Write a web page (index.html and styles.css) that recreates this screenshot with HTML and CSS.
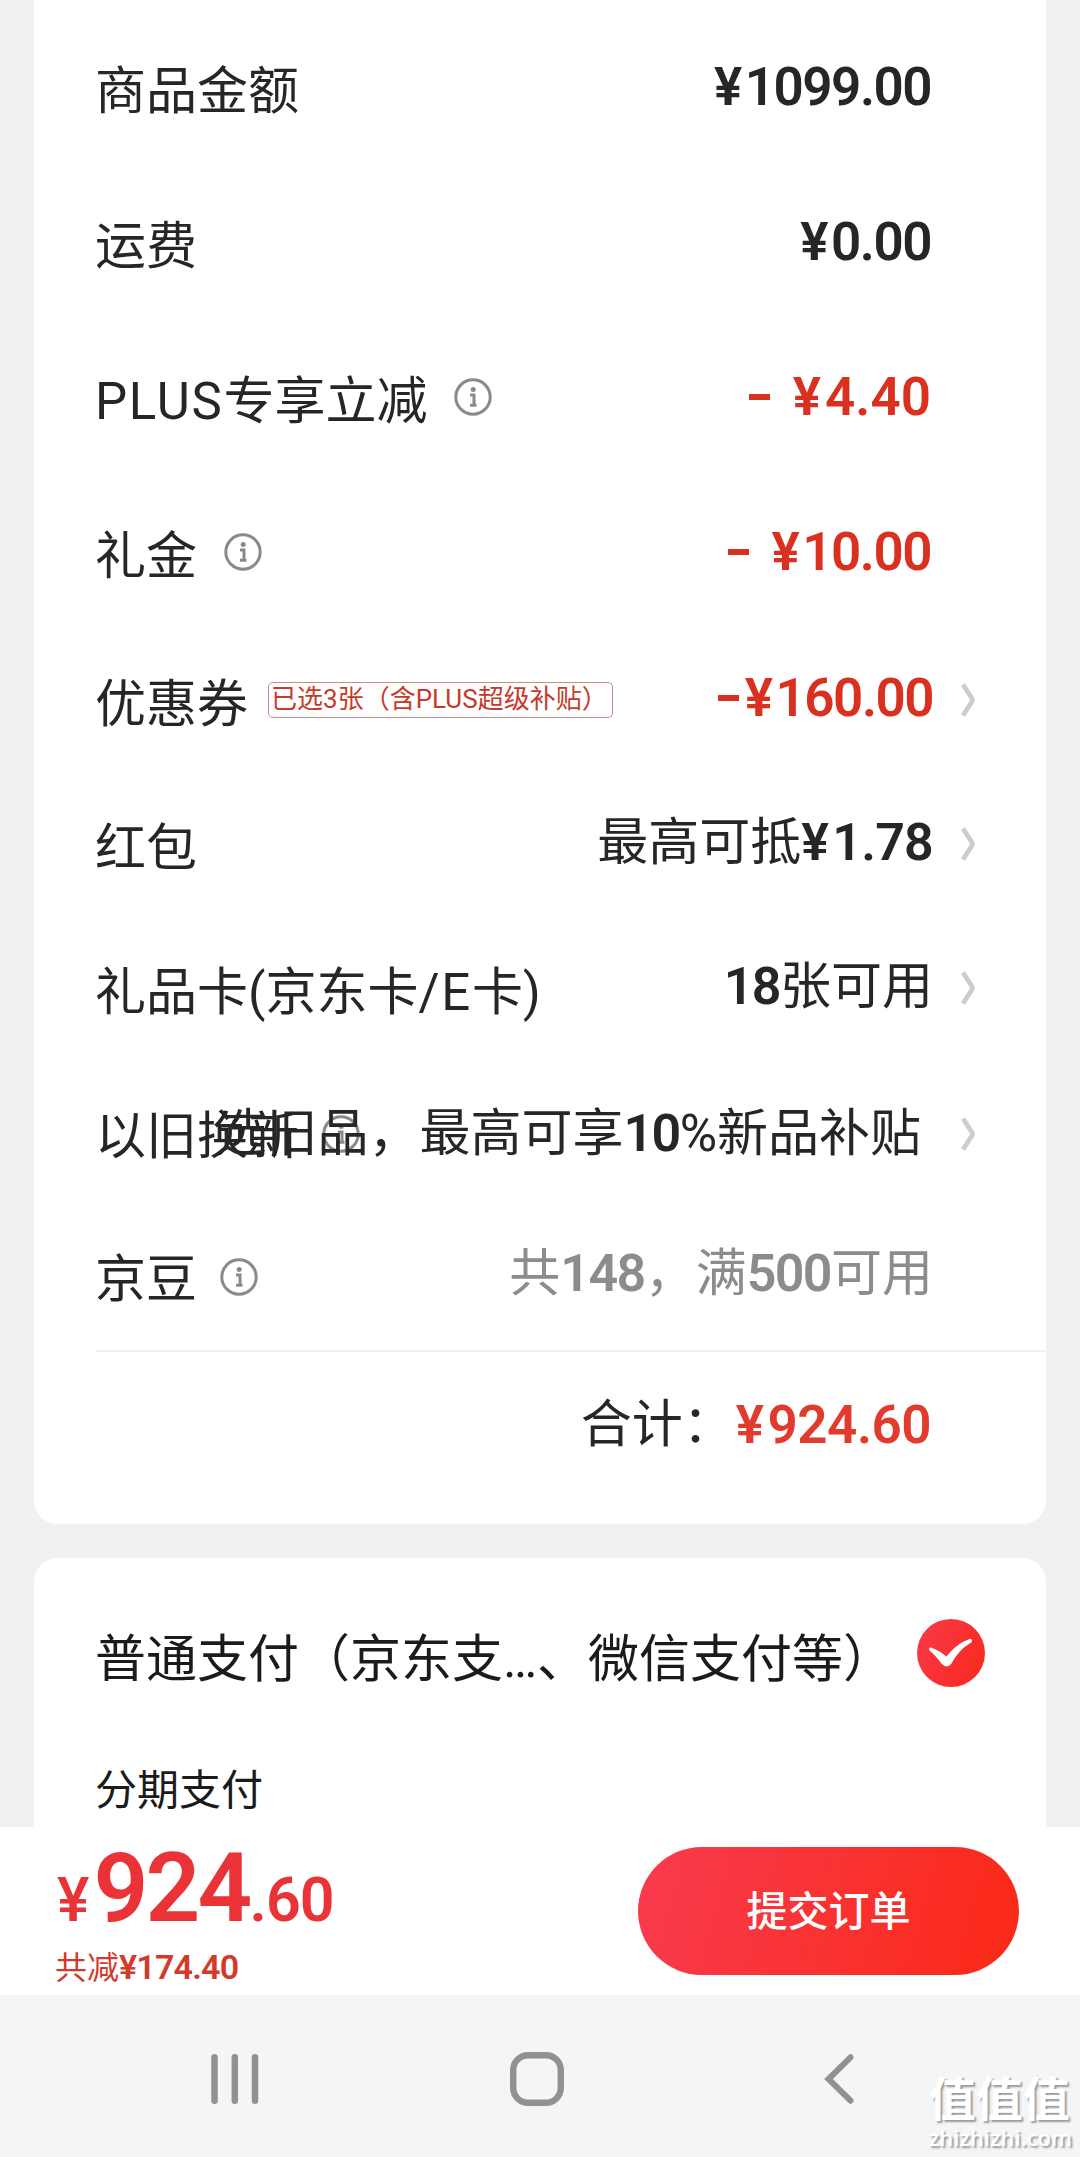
FILE: index.html
```html
<!DOCTYPE html>
<html lang="zh-CN">
<head>
<meta charset="utf-8">
<title>确认订单</title>
<link rel="stylesheet" href="styles.css">
</head>
<body>
<svg class="defs" aria-hidden="true">
  <symbol id="info" viewBox="0 0 38 38">
    <circle cx="19" cy="19" r="17.2" fill="none" stroke="currentColor" stroke-width="3"/>
    <circle cx="19.2" cy="11.4" r="2.5" fill="currentColor"/>
    <path d="M16 17h4v9.500M16 27.200h6.500" fill="none" stroke="currentColor" stroke-width="3"/>
  </symbol>
  <symbol id="chevron" viewBox="0 0 14 34">
    <path d="M2 1.500L11 15.500Q12 17 11 18.500L2 32.500" fill="none" stroke="currentColor" stroke-width="4.800"/>
  </symbol>
</svg>
<main class="page">
  <section class="card summary">
    <div class="row tall"><span class="label">商品金额</span><span class="value"><b><span class="cur">¥</span>1099.00</b></span></div>
    <div class="row tall"><span class="label">运费</span><span class="value"><b><span class="cur">¥</span>0.00</b></span></div>
    <div class="row tall"><span class="label"><span class="latin">PLUS</span>专享立减</span><svg class="info far"><use href="#info"/></svg><span class="value red"><i class="minus"></i><b class="loose"><span class="cur">¥</span>4.40</b></span></div>
    <div class="row tall"><span class="label">礼金</span><svg class="info far"><use href="#info"/></svg><span class="value red"><i class="minus"></i><b><span class="cur">¥</span>10.00</b></span></div>
    <div class="row"><span class="label">优惠券</span><span class="tag">已选3张（含PLUS超级补贴）</span><span class="value red"><i class="minus tight"></i><b><span class="cur">¥</span>160.00</b></span><svg class="chevron"><use href="#chevron"/></svg></div>
    <div class="row"><span class="label">红包</span><span class="value mixed">最高可抵<b class="loose"><span class="cur">¥</span>1.78</b></span><svg class="chevron"><use href="#chevron"/></svg></div>
    <div class="row"><span class="label">礼品卡(京东卡<span class="latin">/E</span>卡)</span><span class="value mixed"><b>18</b>张可用</span><svg class="chevron"><use href="#chevron"/></svg></div>
    <div class="row collide"><span class="label-group"><span class="label">以旧换新</span><svg class="info"><use href="#info"/></svg></span><span class="value mixed">选旧品，最高可享<b>10</b>%新品补贴</span><svg class="chevron"><use href="#chevron"/></svg></div>
    <div class="row last"><span class="label">京豆</span><svg class="info"><use href="#info"/></svg><span class="value mixed gray">共<b>148</b>，满<b>500</b>可用</span></div>
    <div class="total"><span class="total-label">合计：</span><b class="total-sum"><span class="cur">¥</span>924.60</b></div>
  </section>
  <section class="card payment">
    <div class="pay-row"><span class="pay-name">普通支付（京东支…、微信支付等）</span>
      <svg class="check" viewBox="0 0 68 68">
        <defs><linearGradient id="red" x1="0" y1="0" x2="1" y2="0.6"><stop offset="0" stop-color="#f9394a"/><stop offset="1" stop-color="#f92b23"/></linearGradient></defs>
        <circle cx="34" cy="34" r="34" fill="url(#red)"/>
        <path d="M14 28.500C20 31 24 33 29.500 37.500C36 29 43 23.500 52.500 20C55.500 19.500 56 22.500 53.500 24C45 29 39.500 35.500 34.500 44.500C31.500 48.500 27.500 48 24.500 44.500C20.500 39.500 17.500 35.500 13 32C11.500 30.200 12 28 14 28.500Z" fill="#fff"/>
      </svg>
    </div>
    <div class="pay-sub">分期支付</div>
  </section>
</main>
<footer class="checkout">
  <div class="sums">
    <div class="grand"><span class="yen">¥</span><span class="int">924</span><span class="dec">.60</span></div>
    <div class="saved">共减<b>¥174.40</b></div>
  </div>
  <button class="submit">提交订单</button>
</footer>
<nav class="navbar">
  <svg class="key recents" viewBox="0 0 48 50"><path d="M3.500 3.300v43.400M23.800 3.300v43.400M44 3.300v43.400" fill="none" stroke="#919191" stroke-width="6.500" stroke-linecap="round"/></svg>
  <svg class="key home" viewBox="0 0 54 54"><rect x="3.200" y="3.200" width="47.600" height="47.600" rx="15" fill="none" stroke="#919191" stroke-width="6.400"/></svg>
  <svg class="key back" viewBox="0 0 30 50"><path d="M26.500 3.300L4.500 25L26.500 46.700" fill="none" stroke="#919191" stroke-width="6" stroke-linecap="round"/></svg>
  <div class="mark"><span class="mark-name">值值值</span><span class="mark-url">zhizhizhi.com</span></div>
</nav>
</body>
</html>
```
FILE: styles.css
```css
* { box-sizing: border-box; }
body {
  margin: 0;
  width: 1080px;
  height: 2157px;
  overflow: hidden;
  display: flex;
  flex-direction: column;
  background: #f1f1f1;
  color: #262626;
  font-family: Roboto, "Noto Sans CJK SC", sans-serif;
  font-size: 51px;
  line-height: 60px;
  white-space: nowrap;
}
.defs { position: absolute; width: 0; height: 0; }
b { font-weight: 600; }
.page {
  height: 1827px;
  padding: 0 34px;
  overflow: hidden;
  display: flex;
  flex-direction: column;
  gap: 34px;
}
.card { flex: none; background: #fff; border-radius: 24px; }

.summary { height: 1524px; padding-top: 12px; border-top-left-radius: 0; border-top-right-radius: 0; }
.row {
  height: 144px;
  padding: 0 71px 0 61px;
  display: flex;
  align-items: center;
}
.row.tall { height: 155px; padding-right: 115px; }
.row.last { height: 142px; padding-right: 113px; }
.label { padding-top: 2px; }
.tall .label { padding-top: 4px; }
.latin { letter-spacing: 1.7px; }
.value {
  margin-left: auto;
  margin-bottom: 13px;
  display: flex;
  align-items: center;
}
.tall .value { margin-bottom: 6px; }
.value b, .total-sum { font-size: 53px; letter-spacing: -1.5px; }
.value .loose { letter-spacing: 0; }
.cur { margin-right: 4px; }
.value.mixed b { font-size: 52px; letter-spacing: -1.6px; }
.value.mixed .loose { letter-spacing: -0.8px; }
.value.mixed { margin-bottom: 10px; }
.red { color: #d93020; }
.gray { color: #8c8c8c; }
.minus { width: 21px; height: 6px; margin-right: 23px; background: currentColor; }
.minus.tight { margin-right: 6px; }
.info { flex: none; width: 38px; height: 38px; margin: 0 0 5px 23px; color: #8a8a8a; }
.info.far { margin-left: 27px; }
.chevron { flex: none; width: 14px; height: 34px; margin: 0 0 8px 28px; color: #cdcdcd; }
.tag {
  width: 345px;
  height: 36px;
  margin: 0 0 9px 20px;
  padding-left: 2px;
  border: 1px solid #c09088;
  border-radius: 5px;
  color: #c63a2b;
  font-size: 26px;
  line-height: 33px;
}
.collide .label-group { width: 0; display: flex; align-items: center; }
.collide .value { margin-right: 12px; margin-bottom: 4px; }
.collide .chevron { margin-bottom: 5px; }

.total {
  height: 143px;
  margin-left: 61px;
  padding: 4px 115px 0 0;
  border-top: 2px solid #f1f1f1;
  display: flex;
  align-items: center;
  justify-content: flex-end;
}
.total-label { margin-right: 2px; }
.total-sum { color: #e23a2c; letter-spacing: -0.5px; }

.payment { height: 300px; padding: 60px 61px 0 61px; color: #1b1b1b; }
.pay-row { height: 70px; display: flex; align-items: center; justify-content: space-between; }
.pay-name { padding-top: 14px; }
.check { flex: none; width: 68px; height: 68px; }
.pay-sub { margin-top: 73px; font-size: 42px; }

.checkout {
  height: 168px;
  padding: 0 61px 0 55px;
  background: #fff;
  display: flex;
  align-items: center;
  justify-content: space-between;
}
.sums { padding-top: 2px; color: #ea3336; }
.grand { height: 110px; display: flex; align-items: baseline; font-weight: 600; line-height: 110px; }
.yen, .dec { font-size: 61px; }
.yen { margin: 0 4px 0 2px; font-weight: 500; }
.int { font-size: 96px; letter-spacing: -2.8px; }
.dec { letter-spacing: -1px; }
.saved { height: 48px; font-size: 32px; line-height: 48px; color: #d33a2c; }
.saved b { font-size: 34px; letter-spacing: -0.8px; }
.submit {
  width: 381px;
  height: 128px;
  padding: 0 0 6px;
  border: 0;
  border-radius: 64px;
  background: linear-gradient(105deg, #f83a4b 8%, #fa2a1a 92%);
  color: #fff;
  font: 500 41px/60px "Noto Sans CJK SC", sans-serif;
}

.navbar {
  flex: 1;
  padding: 57px 8px 0 211px;
  background: #f5f5f5;
  display: flex;
  align-items: flex-start;
}
.key { flex: none; }
.recents { width: 48px; height: 50px; margin-top: 2px; }
.home { width: 54px; height: 54px; margin-left: 251px; }
.back { width: 30px; height: 50px; margin: 2px 0 0 260px; }
.mark {
  margin: 15px 0 0 auto;
  display: flex;
  flex-direction: column;
  color: #fff;
  text-shadow: 2px 2px 2px #999;
}
.mark-name { font: 700 47px/58px "Noto Sans CJK SC", sans-serif; }
.mark-url { font: 600 22px/24px "Open Sans", sans-serif; }
```
